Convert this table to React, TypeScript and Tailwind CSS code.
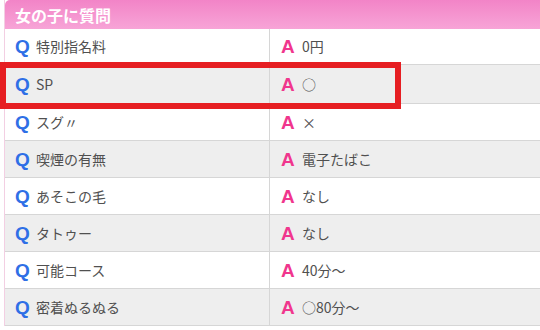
const rows = [
  { q: '特別指名料', a: '0円', h: 'h-[36px]' },
  { q: 'SP', a: '○', h: 'h-[39px]' },
  { q: 'スグ〃', a: '×', h: 'h-[37px]' },
  { q: '喫煙の有無', a: '電子たばこ', h: 'h-[37px]' },
  { q: 'あそこの毛', a: 'なし', h: 'h-[37px]' },
  { q: 'タトゥー', a: 'なし', h: 'h-[37px]' },
  { q: '可能コース', a: '40分～', h: 'h-[37px]' },
  { q: '密着ぬるぬる', a: '○80分～', h: 'h-[37px]' },
];

export default function App() {
  return (
    <div className="relative w-[540px] h-[330px] overflow-hidden bg-white font-['Noto_Sans_CJK_JP',sans-serif]">
      <div className="ml-[4px] border-l border-[#f3cfe3]">
        <div className="h-[29px] rounded-tl-[5px] bg-gradient-to-b from-[#f284c7] to-[#f7a4d7] pl-[10px] flex items-center">
          <span className="text-white font-bold text-[16px] leading-none">女の子に質問</span>
        </div>
        {rows.map((r, i) => (
          <div
            key={i}
            className={`flex ${r.h} border-b border-[#d6d6d6] ${i % 2 === 0 ? 'bg-white' : 'bg-[#eeeeee]'}`}
          >
            <div className="w-[265px] flex items-center pl-[10px] border-r border-[#d6d6d6]">
              <span className="w-[21px] text-[19px] font-bold text-[#2f6fe6] font-['Liberation_Sans',sans-serif] leading-none">Q</span>
              <span className="text-[14px] text-[#505050]">{r.q}</span>
            </div>
            <div className="flex-1 flex items-center pl-[11px]">
              <span className="w-[21px] text-[19px] font-bold text-[#f0368d] font-['Liberation_Sans',sans-serif] leading-none">A</span>
              <span className="text-[14px] text-[#505050]">{r.a}</span>
            </div>
          </div>
        ))}
      </div>
      <div className="absolute left-0 top-[62px] w-[401px] h-[47px] border-[6px] border-[#e61e22]" />
    </div>
  );
}
